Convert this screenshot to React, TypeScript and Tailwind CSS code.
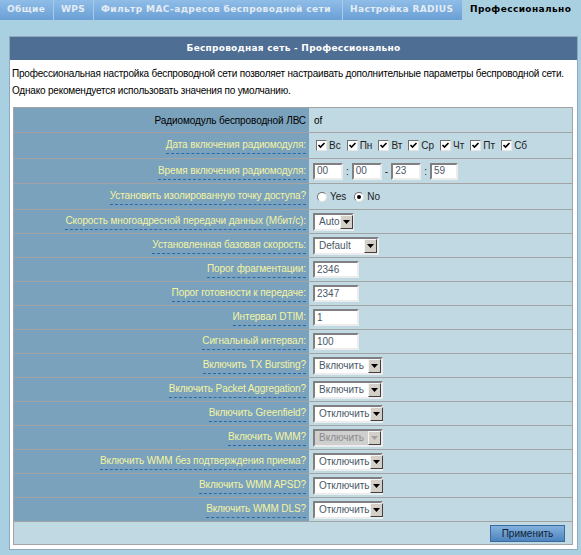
import React from "react";

const SANS = "font-['Liberation_Sans',Arial,sans-serif]";
const VERD = "font-['DejaVu_Sans',Verdana,sans-serif]";

function Lbl({ children, plain }: { children: React.ReactNode; plain?: boolean }) {
  if (plain) return <span className="text-black">{children}</span>;
  return (
    <span className="text-[#f4f4a2] border-b border-dashed border-[#2a6aac] pb-[1px]">{children}</span>
  );
}

function Input({ value, w }: { value: string; w: string }) {
  return (
    <div
      className={`${w} h-[17px] bg-white border-2 border-t-[#808080] border-l-[#808080] border-r-[#ececec] border-b-[#ececec] flex items-center pl-[2px] text-[10px] text-[#4a5866] leading-none`}
    >
      {value}
    </div>
  );
}

function Select({ value, w, disabled }: { value: string; w: string; disabled?: boolean }) {
  return (
    <div
      className={`${w} h-[18px] ${disabled ? "bg-[#cfcfcf]" : "bg-white"} border-2 border-t-[#808080] border-l-[#808080] border-r-[#ececec] border-b-[#ececec] flex items-center justify-between text-[10px] leading-none`}
    >
      <span className={`pl-[4px] whitespace-nowrap ${disabled ? "text-[#8a8a8a]" : "text-[#4a5866]"}`}>{value}</span>
      <div className="w-[13px] h-[14px] shrink-0 bg-[#d4d0c8] border border-t-[#f4f4f4] border-l-[#f4f4f4] border-r-[#404040] border-b-[#404040] flex items-center justify-center">
        <svg width="7" height="4" viewBox="0 0 7 4">
          <path d="M0 0 H7 L3.5 4 Z" fill={disabled ? "#a0a0a0" : "#000"} />
        </svg>
      </div>
    </div>
  );
}

function Check({ label }: { label: string }) {
  return (
    <div className="flex items-center gap-[2px]">
      <div className="w-[11px] h-[11px] bg-white border border-t-[#707070] border-l-[#707070] border-r-[#e6e6e6] border-b-[#e6e6e6] flex items-center justify-center">
        <svg width="9" height="9" viewBox="0 0 9 9">
          <path d="M1.5 4 L3.5 6 L7.5 2" stroke="#000" strokeWidth="1.6" fill="none" />
        </svg>
      </div>
      <span className="text-[10px] text-[#222]">{label}</span>
    </div>
  );
}

function Radio({ label, checked }: { label: string; checked?: boolean }) {
  return (
    <div className="flex items-center gap-[3px]">
      <div className="w-[10px] h-[10px] rounded-full bg-white border border-t-[#707070] border-l-[#707070] border-r-[#e0e0e0] border-b-[#e0e0e0] flex items-center justify-center">
        {checked && <div className="w-[4px] h-[4px] rounded-full bg-black" />}
      </div>
      <span className="text-[10px] text-[#222]">{label}</span>
    </div>
  );
}

function Row({ h, label, plain, children }: { h: string; label: string; plain?: boolean; children: React.ReactNode }) {
  return (
    <div className={`grid grid-cols-[295px_1fr] ${h} border-b border-[#a3a3a3]`}>
      <div className="bg-[#7ba2bc] flex items-center justify-end pr-[3px] text-[10px] tracking-[-0.1px] whitespace-nowrap">
        <Lbl plain={plain}>{label}</Lbl>
      </div>
      <div className="bg-[#c1d9e3] flex items-center pl-[4px] text-[10px]">{children}</div>
    </div>
  );
}

const tabs: [string, string][] = [
  ["Общие", "w-[54px]"],
  ["WPS", "w-[40px]"],
  ["Фильтр MAC-адресов беспроводной сети", "w-[249px]"],
  ["Настройка RADIUS", "w-[120px]"],
];

export default function App() {
  return (
    <div className={`w-[581px] h-[555px] bg-[#a9d0e0] overflow-hidden ${SANS}`}>
      {/* Tabs */}
      <div className={`flex h-[20px] ${VERD} text-[9px] font-bold tracking-[0.4px]`}>
        {tabs.map(([t, w]) => (
          <div
            key={t}
            className={`${w} shrink-0 h-full flex items-center pl-[7px] bg-gradient-to-b from-[#90bde8] to-[#6a9fd5] text-[#e4ecf4] border-r border-[#a8cbe9] whitespace-nowrap`}
          >
            {t}
          </div>
        ))}
        <div className="h-full flex-1 flex items-center pl-[7px] text-black whitespace-nowrap">
          Профессионально
        </div>
      </div>

      {/* Panel */}
      <div className="ml-[9px] mt-[16px] w-[569px] border border-[#90a8c0] bg-white">
        <div className={`h-[23px] bg-[#4e6e93] flex items-center justify-center text-white font-bold text-[9px] ${VERD} tracking-[0.25px]`}>
          Беспроводная сеть - Профессионально
        </div>
        <div className="px-[2px] pt-[5px] h-[47px] text-[10px] tracking-[-0.2px] text-black leading-[17px] whitespace-nowrap">
          <p>Профессиональная настройка беспроводной сети позволяет настраивать дополнительные параметры беспроводной сети.</p>
          <p>Однако рекомендуется использовать значения по умолчанию.</p>
        </div>
        <div className="pl-[3px] pr-[4px] pb-[4px]">
          <div className="border border-[#a3a3a3] border-b-0">
            <Row h="h-[25px]" label="Радиомодуль беспроводной ЛВС" plain>
              <span className="text-black pl-[1px]">of</span>
            </Row>
            <Row h="h-[26px]" label="Дата включения радиомодуля:">
              <div className="flex items-center gap-[6px] pl-[3px]">
                {["Вс", "Пн", "Вт", "Ср", "Чт", "Пт", "Сб"].map((d) => (
                  <Check key={d} label={d} />
                ))}
              </div>
            </Row>
            <Row h="h-[25px]" label="Время включения радиомодуля:">
              <div className="flex items-center gap-[3px] text-[#222]">
                <Input value="00" w="w-[30px]" />
                <span>:</span>
                <Input value="00" w="w-[30px]" />
                <span>-</span>
                <Input value="23" w="w-[30px]" />
                <span>:</span>
                <Input value="59" w="w-[28px]" />
              </div>
            </Row>
            <Row h="h-[26px]" label="Установить изолированную точку доступа?">
              <div className="flex items-center gap-[8px] pl-[4px]">
                <Radio label="Yes" />
                <Radio label="No" checked />
              </div>
            </Row>
            <Row h="h-[24px]" label="Скорость многоадресной передачи данных (Мбит/с):">
              <Select value="Auto" w="w-[41px]" />
            </Row>
            <Row h="h-[24px]" label="Установленная базовая скорость:">
              <Select value="Default" w="w-[66px]" />
            </Row>
            <Row h="h-[24px]" label="Порог фрагментации:">
              <Input value="2346" w="w-[46px]" />
            </Row>
            <Row h="h-[24px]" label="Порог готовности к передаче:">
              <Input value="2347" w="w-[46px]" />
            </Row>
            <Row h="h-[24px]" label="Интервал DTIM:">
              <Input value="1" w="w-[46px]" />
            </Row>
            <Row h="h-[24px]" label="Сигнальный интервал:">
              <Input value="100" w="w-[46px]" />
            </Row>
            <Row h="h-[24px]" label="Включить TX Bursting?">
              <Select value="Включить" w="w-[70px]" />
            </Row>
            <Row h="h-[24px]" label="Включить Packet Aggregation?">
              <Select value="Включить" w="w-[70px]" />
            </Row>
            <Row h="h-[24px]" label="Включить Greenfield?">
              <Select value="Отключить" w="w-[70px]" />
            </Row>
            <Row h="h-[24px]" label="Включить WMM?">
              <Select value="Включить" w="w-[70px]" disabled />
            </Row>
            <Row h="h-[24px]" label="Включить WMM без подтверждения приема?">
              <Select value="Отключить" w="w-[70px]" />
            </Row>
            <Row h="h-[24px]" label="Включить WMM APSD?">
              <Select value="Отключить" w="w-[70px]" />
            </Row>
            <Row h="h-[24px]" label="Включить WMM DLS?">
              <Select value="Отключить" w="w-[70px]" />
            </Row>
            <div className="h-[23px] bg-[#c1d9e3] border-b border-[#a3a3a3] flex items-center justify-end pr-[7px]">
              <div className="w-[75px] h-[17px] bg-gradient-to-b from-[#84b2de] to-[#4f83bd] border border-[#3a6a9e] flex items-center justify-center text-[10px] text-[#0e1e36]">
                Применить
              </div>
            </div>
          </div>
        </div>
      </div>
    </div>
  );
}
